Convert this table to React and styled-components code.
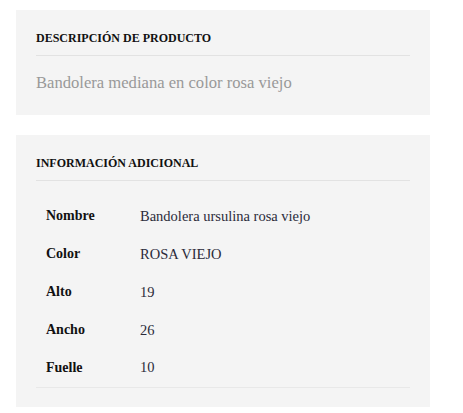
import React from "react";
import styled, { createGlobalStyle } from "styled-components";

const Global = createGlobalStyle`
  html, body { margin: 0; padding: 0; background: #ffffff; }
  body { font-family: "Liberation Serif", "DejaVu Serif", serif; }
`;

const Page = styled.div`
  width: 414px;
  padding: 10px 0 0 16px;
  display: flex;
  flex-direction: column;
  gap: 20px;
`;

const Panel = styled.section`
  background: #f4f4f4;
  padding: 19px 20px ${(p) => p.$bottom ?? 20}px;
`;

const Heading = styled.h2`
  margin: 0;
  font-size: 12px;
  line-height: 18px;
  font-weight: 700;
  color: #111111;
  text-transform: uppercase;
  padding-bottom: 8px;
  border-bottom: 1px solid #e2e2e2;
`;

const Description = styled.p`
  margin: 16px 0 0;
  font-size: 16.6px;
  line-height: 22px;
  color: #999999;
`;

const Table = styled.table`
  width: 100%;
  border-collapse: collapse;
  margin-top: 16px;
  border-bottom: 1px solid #e8e8e8;
`;

const Row = styled.tr`
  height: 38px;
`;

const Label = styled.th`
  width: 84px;
  padding: 0 0 0 10px;
  text-align: left;
  font-size: 14px;
  font-weight: 700;
  color: #111111;
  vertical-align: middle;
`;

const Value = styled.td`
  padding: 0 10px;
  font-size: 14.5px;
  color: #2b2b3a;
  vertical-align: middle;
  font-variant-numeric: oldstyle-nums;
`;

const rows = [
  ["Nombre", "Bandolera ursulina rosa viejo"],
  ["Color", "ROSA VIEJO"],
  ["Alto", "19"],
  ["Ancho", "26"],
  ["Fuelle", "10"],
];

export default function App() {
  return (
    <>
      <Global />
      <Page>
        <Panel $bottom={21}>
          <Heading>Descripción de producto</Heading>
          <Description>Bandolera mediana en color rosa viejo</Description>
        </Panel>
        <Panel $bottom={19}>
          <Heading>Información adicional</Heading>
          <Table>
            <tbody>
              {rows.map(([k, v]) => (
                <Row key={k}>
                  <Label>{k}</Label>
                  <Value>{v}</Value>
                </Row>
              ))}
            </tbody>
          </Table>
        </Panel>
      </Page>
    </>
  );
}
